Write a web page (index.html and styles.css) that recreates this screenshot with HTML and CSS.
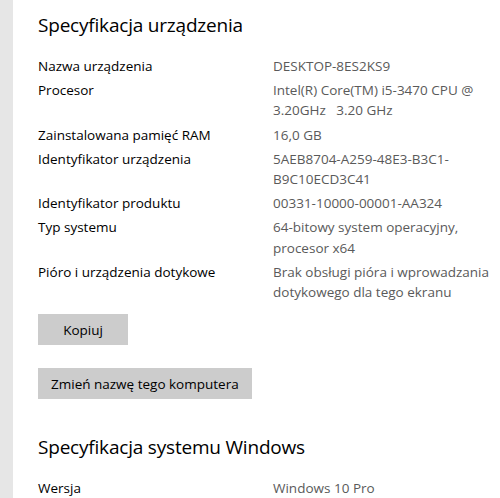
FILE: index.html
```html
<!DOCTYPE html>
<html lang="pl">
<head>
<meta charset="utf-8">
<link rel="stylesheet" href="styles.css">
</head>
<body>
<div class="page">
  <div class="strip"></div>
  <main class="content">
    <h2 class="heading">Specyfikacja urządzenia</h2>
    <dl class="specs">
      <div class="row"><dt>Nazwa urządzenia</dt><dd>DESKTOP-8ES2KS9</dd></div>
      <div class="row"><dt>Procesor</dt><dd>Intel(R) Core(TM) i5-3470 CPU @ 3.20GHz&nbsp;&nbsp; 3.20 GHz</dd></div>
      <div class="row"><dt>Zainstalowana pamięć RAM</dt><dd>16,0 GB</dd></div>
      <div class="row"><dt>Identyfikator urządzenia</dt><dd>5AEB8704-A259-48E3-B3C1-B9C10ECD3C41</dd></div>
      <div class="row"><dt>Identyfikator produktu</dt><dd>00331-10000-00001-AA324</dd></div>
      <div class="row"><dt>Typ systemu</dt><dd>64-bitowy system operacyjny, procesor x64</dd></div>
      <div class="row"><dt>Pióro i urządzenia dotykowe</dt><dd>Brak obsługi pióra i wprowadzania dotykowego dla tego ekranu</dd></div>
    </dl>
    <div class="actions">
      <button class="btn btn-copy">Kopiuj</button>
      <button class="btn">Zmień nazwę tego komputera</button>
    </div>
    <h2 class="heading heading-second">Specyfikacja systemu Windows</h2>
    <dl class="specs">
      <div class="row"><dt>Wersja</dt><dd>Windows 10 Pro</dd></div>
    </dl>
  </main>
</div>
</body>
</html>
```
FILE: styles.css
```css
html, body {
  margin: 0;
  padding: 0;
  background: #ffffff;
  overflow: hidden;
}
body {
  font-family: "Open Sans", "Noto Sans", sans-serif;
  color: #000;
}
.page {
  display: flex;
  min-height: 498px;
}
.strip {
  width: 13px;
  flex: none;
  background: #e6e6e6;
}
.content {
  flex: 1;
  padding: 10px 0 0 25px;
}
.heading {
  margin: 0;
  font-weight: 400;
  font-size: 19px;
  line-height: 30px;
  letter-spacing: -0.2px;
  color: #000;
}
.specs {
  margin: 16px 0 0 0;
  font-size: 13.5px;
  line-height: 20.2px;
}
.row {
  display: grid;
  grid-template-columns: 235px 1fr;
  margin-bottom: 4px;
}
.row dt {
  color: #000;
}
.row dd {
  margin: 0;
  color: #5a5a5a;
}
.actions {
  display: flex;
  flex-direction: column;
  align-items: flex-start;
  gap: 23px;
  margin-top: 12px;
}
.btn {
  font-family: inherit;
  font-size: 13.5px;
  color: #000;
  background: #cccccc;
  border: none;
  border-radius: 0;
  height: 31px;
  padding: 0 13px;
  margin: 0;
}
.btn-copy {
  width: 90px;
}
.heading-second {
  margin-top: 33px;
}
```
